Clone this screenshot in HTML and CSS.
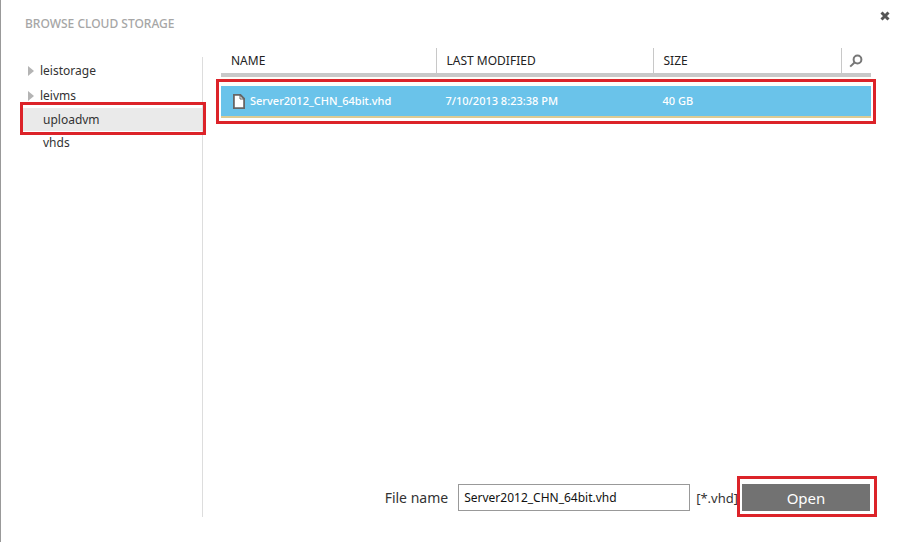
FILE: index.html
```html
<!DOCTYPE html>
<html lang="en">

<head>
    <meta charset="UTF-8">
    <meta name="viewport" content="width=device-width, initial-scale=1.0">
    <title>Browse Cloud Storage</title>
    <link rel="stylesheet" href="styles.css">
</head>

<body>
    <div class="dialog">
        <div class="dialog-header">
            <h1>BROWSE CLOUD STORAGE</h1>
            <button type="button" class="close-btn" aria-label="Close">
                <svg width="10" height="10" viewBox="0 0 10 10">
                    <path d="M1.5 1.5 L8.5 8.5 M8.5 1.5 L1.5 8.5" />
                </svg>
            </button>
        </div>

        <div class="dialog-body">
            <!-- Storage accounts and containers -->
            <nav class="storage-tree">
                <ul>
                    <li><a href="#" class="account">leistorage</a></li>
                    <li>
                        <a href="#" class="account">leivms</a>
                        <ul>
                            <li><a href="#" class="container highlight selected">uploadvm</a></li>
                            <li><a href="#" class="container">vhds</a></li>
                        </ul>
                    </li>
                </ul>
            </nav>

            <div class="file-panel">
                <table class="file-table">
                    <thead>
                        <tr>
                            <th class="col-name">NAME</th>
                            <th class="col-modified">LAST MODIFIED</th>
                            <th class="col-size">SIZE</th>
                            <th class="col-search">
                                <button type="button" class="search-btn" aria-label="Search">
                                    <svg width="14" height="14" viewBox="0 0 14 14">
                                        <circle cx="8.5" cy="5.5" r="3.9" />
                                        <path d="M5.8 8.2 L1.2 12.6" />
                                    </svg>
                                </button>
                            </th>
                        </tr>
                    </thead>
                    <tbody>
                        <tr class="highlight-row">
                            <td>
                                <div class="file-name">
                                    <svg class="file-icon" width="12" height="15" viewBox="0 0 12 15">
                                        <path class="sheet" d="M0.8 0.8 H7.2 L11.2 4.8 V14.2 H0.8 Z" />
                                        <path class="fold" d="M7 0.8 V5 H11.2" />
                                    </svg>
                                    <span>Server2012_CHN_64bit.vhd</span>
                                </div>
                            </td>
                            <td>7/10/2013 8:23:38 PM</td>
                            <td>40 GB</td>
                            <td></td>
                        </tr>
                    </tbody>
                </table>

                <form class="file-form">
                    <label for="file-name">File name</label>
                    <input type="text" id="file-name" value="Server2012_CHN_64bit.vhd">
                    <span class="file-type">[*.vhd]</span>
                    <button type="button" class="open-btn highlight">Open</button>
                </form>
            </div>
        </div>
    </div>
</body>

</html>
```

FILE: styles.css
```css
:root {
    --text-color: #333;
    --muted-color: #a6a6a6;
    --line-color: #c8c8c8;
    --row-color: #6ac3ea;
    --row-edge-color: #dccb94;
    --highlight-color: #dc2329;
}

* {
    box-sizing: border-box;
    margin: 0;
    padding: 0;
}

body {
    font-family: "Noto Sans", "Open Sans", sans-serif;
    font-size: 12px;
    line-height: 16px;
    color: var(--text-color);
    background-color: #fff;
}

.dialog {
    display: flex;
    flex-direction: column;
    min-height: 100vh;
    padding-bottom: 25px;
    border-left: 1px solid #999;
}

.dialog-header {
    display: flex;
    justify-content: space-between;
    align-items: flex-start;
    padding: 9px 13px 0 24px;
}

h1 {
    margin-top: 7px;
    font-size: 12px;
    font-weight: 500;
    color: var(--muted-color);
}

button {
    border: none;
    cursor: pointer;
    font-family: inherit;
}

.close-btn {
    display: flex;
    padding: 2px;
    background: none;
}

.close-btn svg {
    fill: none;
    stroke: #555;
    stroke-width: 3;
}

.dialog-body {
    display: flex;
    flex-grow: 1;
    padding-top: 16px;
}

/* red frame around the parts of a step */
.highlight,
.highlight-row {
    position: relative;
}

.highlight::after,
.highlight-row td:last-child::after {
    content: "";
    position: absolute;
    inset: -6px -4px -4px -3px;
    border: 3px solid var(--highlight-color);
    pointer-events: none;
}

/* tree */
.storage-tree {
    flex: 0 0 202px;
    margin-top: 9px;
    padding-left: 22px;
    border-right: 1px solid #ddd;
}

.storage-tree ul {
    list-style: none;
}

.storage-tree a {
    display: flex;
    align-items: center;
    height: 25px;
    color: var(--text-color);
    text-decoration: none;
}

.storage-tree .account {
    gap: 6px;
    padding-left: 5px;
}

.storage-tree > ul {
    padding-top: 1px;
}

.account::before {
    content: "";
    border: 5px solid transparent;
    border-left: 6px solid #b4b4b4;
    border-right: none;
}

.storage-tree .container {
    height: 23px;
    padding-left: 20px;
}

.storage-tree .selected {
    background-color: #eaeaea;
}

/* files */
.file-panel {
    display: flex;
    flex-direction: column;
    flex: 1 1 0;
    min-width: 0;
    padding: 0 34px 6px 18px;
}

.file-table {
    width: 100%;
    table-layout: fixed;
    border-spacing: 0;
    text-align: left;
}

.file-table th {
    height: 29px;
    padding-left: 11px;
    font-weight: normal;
    color: #222;
    border-bottom: 4px solid var(--line-color);
    background: linear-gradient(var(--line-color), var(--line-color)) no-repeat left / 1px 100%;
}

.file-table .col-name {
    padding-left: 10px;
    background: none;
}

.col-name {
    width: 33%;
}

.col-size {
    width: 29%;
}

.file-table .col-search {
    width: 30px;
    padding-left: 8px;
}

.search-btn {
    display: flex;
    background: none;
}

.search-btn svg {
    fill: none;
    stroke: #777;
    stroke-width: 2;
}

.file-table td {
    height: 41px;
    padding-left: 10px;
    font-size: 11px;
    font-weight: 500;
    color: #fff;
    background-color: var(--row-color);
    border-top: 9px solid #fffdf8;
    border-bottom: 2px solid var(--row-edge-color);
}

.highlight-row td:last-child::after {
    inset: 2px -5px -6px -5px;
}

.file-name {
    display: flex;
    align-items: center;
    gap: 5px;
    padding-left: 2px;
}

.file-icon .sheet {
    fill: #fff;
    stroke: #666;
    stroke-width: 2;
}

.file-icon .fold {
    fill: none;
    stroke: #666;
}

/* bottom bar */
.file-form {
    display: flex;
    align-items: center;
    justify-content: flex-end;
    margin-top: auto;
    padding-right: 1px;
}

.file-form label {
    margin-right: 10px;
    font-size: 14px;
}

.file-form input {
    width: 232px;
    height: 27px;
    padding: 0 5px;
    border: 1px solid #999;
    font-family: inherit;
    font-size: 12px;
    color: #111;
}

.file-type {
    margin: 0 4px 0 6px;
    font-size: 13px;
}

.open-btn {
    width: 128px;
    height: 27px;
    background-color: #727272;
    color: #fff;
    font-size: 15px;
}

.open-btn::after {
    inset: -8px -7px -6px -5px;
}
```
